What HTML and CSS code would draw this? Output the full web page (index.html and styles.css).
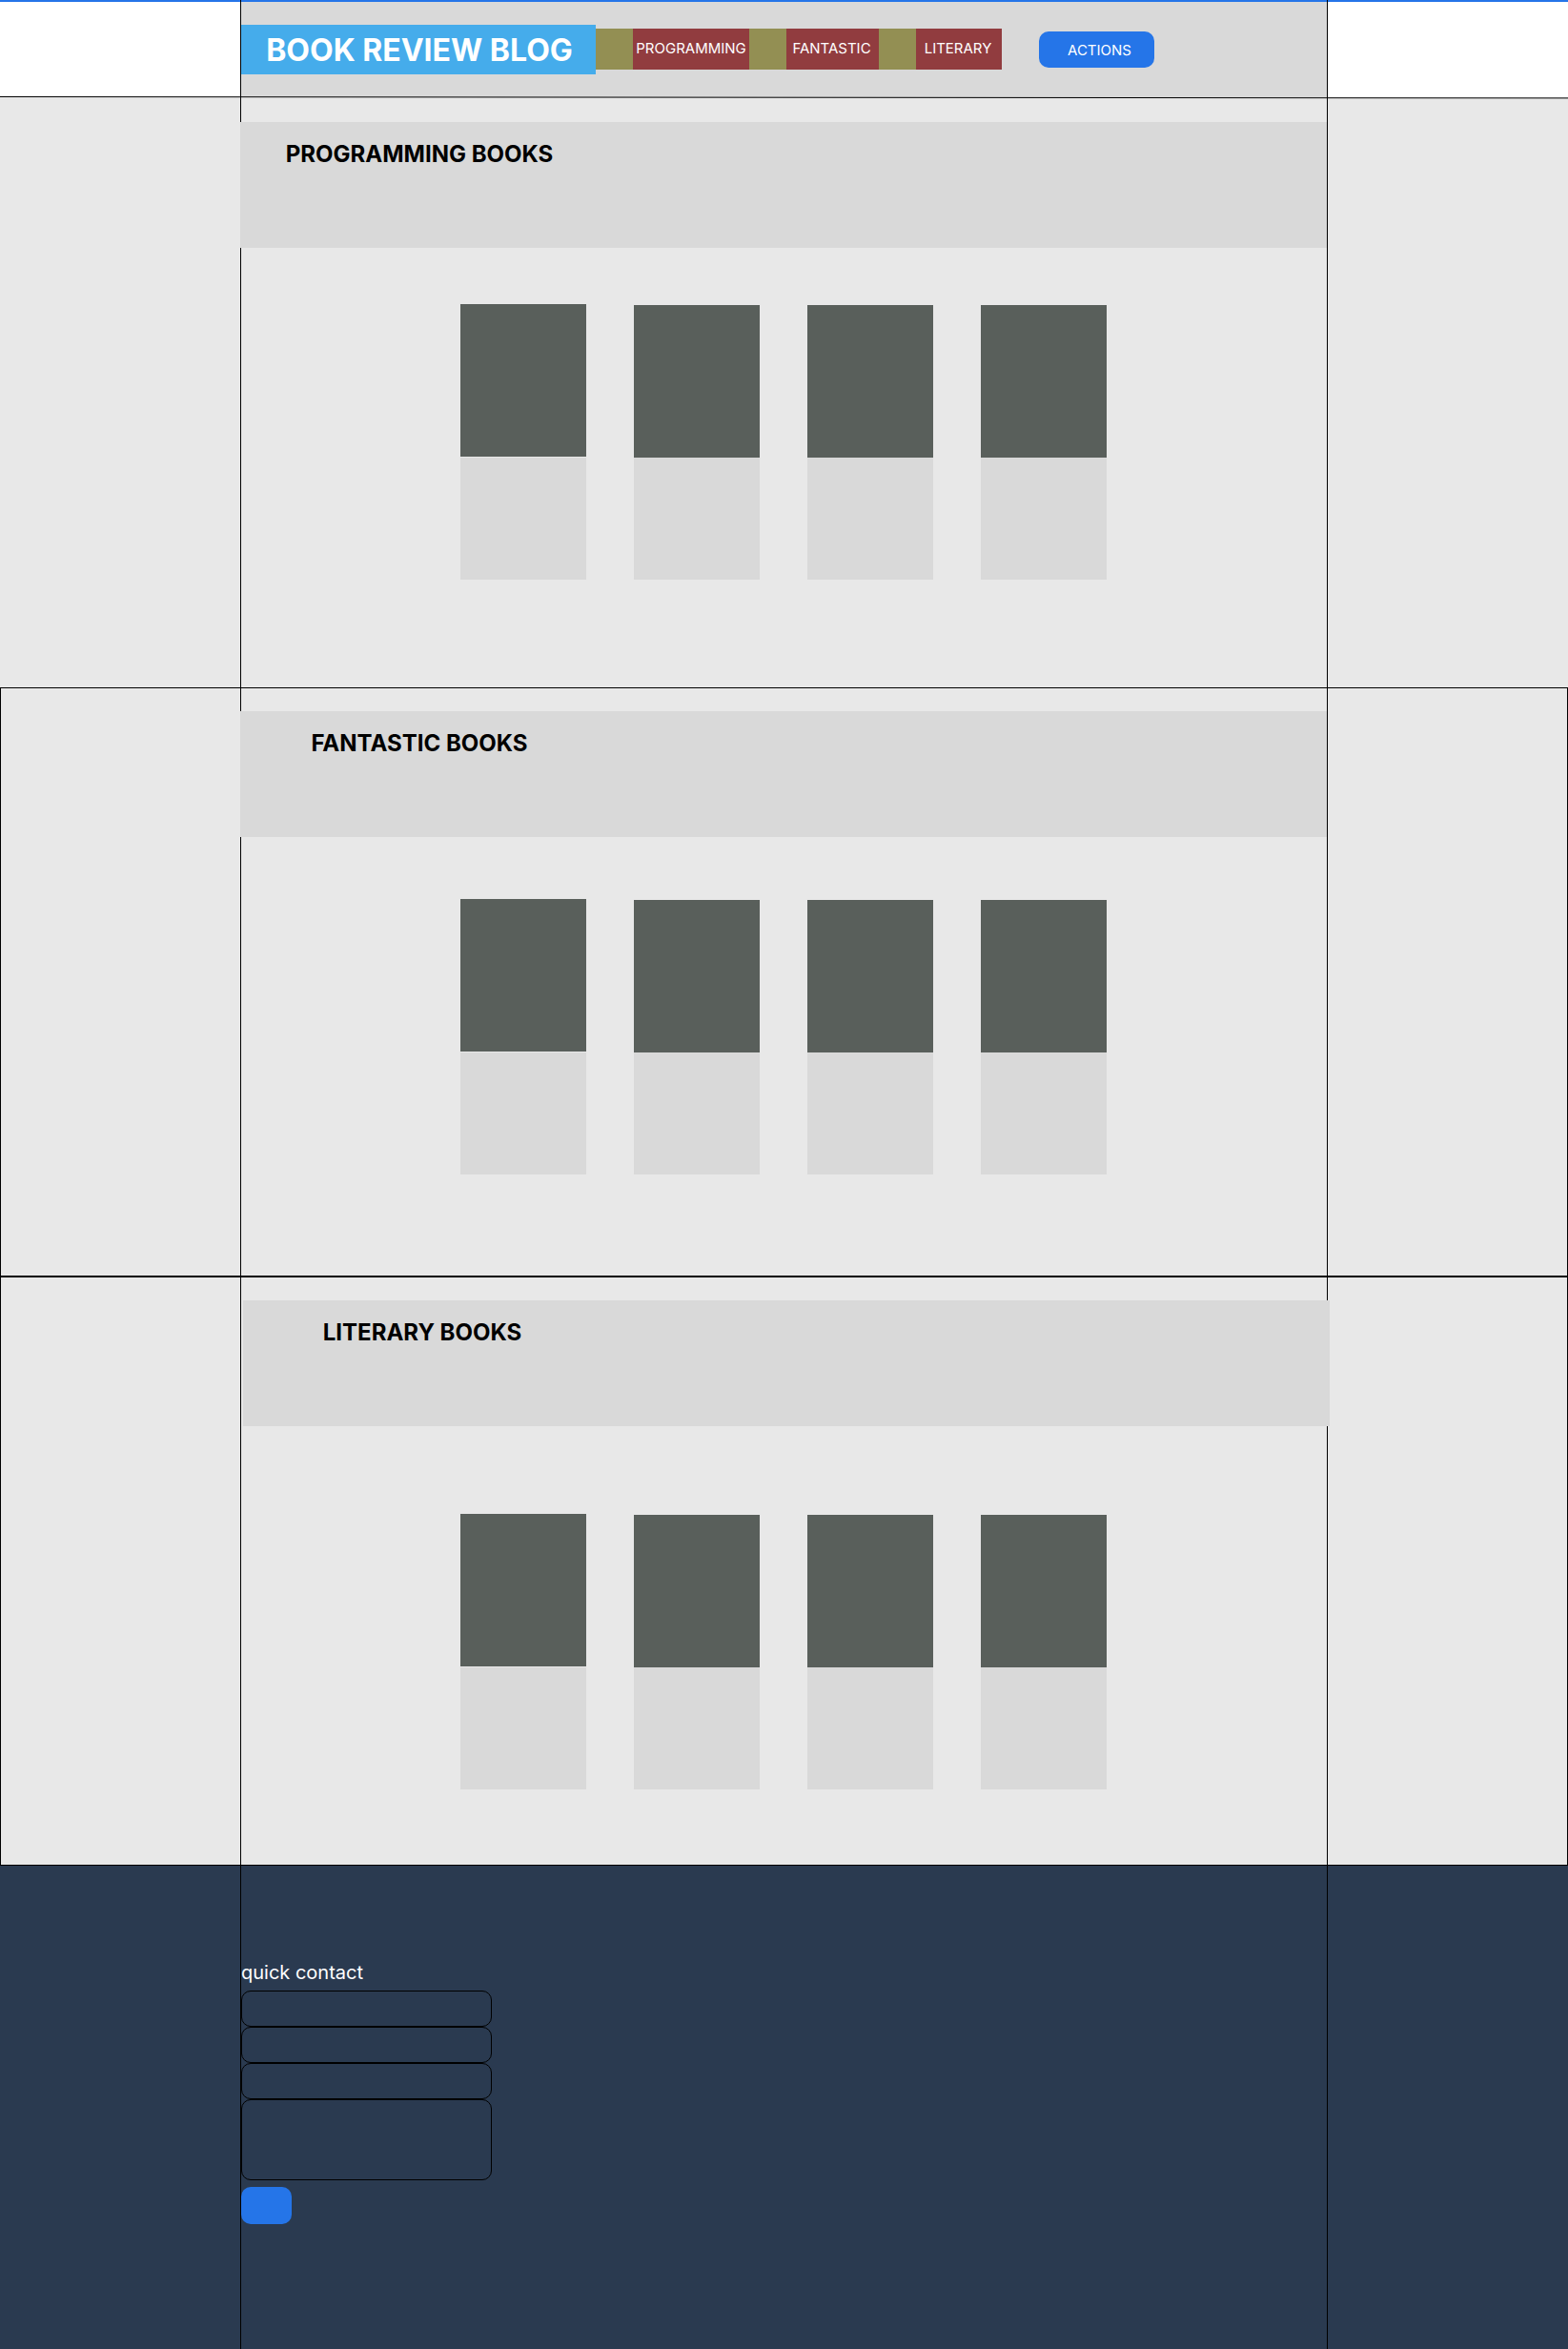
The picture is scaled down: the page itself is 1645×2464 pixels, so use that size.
FILE: index.html
```html
<!DOCTYPE html>
<html lang="en">
<head>
<meta charset="utf-8">
<meta name="viewport" content="width=device-width, initial-scale=1">
<title>Book Review Blog</title>
<link rel="stylesheet" href="styles.css">
</head>
<body>
<header class="site-header">
  <div class="container header-bar">
    <h1 class="brand">BOOK REVIEW BLOG</h1>
    <nav class="nav" aria-label="Categories">
      <a class="nav-link nav-link-lg" href="#programming">PROGRAMMING</a>
      <a class="nav-link nav-link-md" href="#fantastic">FANTASTIC</a>
      <a class="nav-link nav-link-sm" href="#literary">LITERARY</a>
    </nav>
    <button class="button actions" type="button">ACTIONS</button>
  </div>
  <svg class="header-rule" viewBox="0 0 1645 3" preserveAspectRatio="none" aria-hidden="true"><path d="M0 .5L1645 1.9" stroke="#000" stroke-width="1"/></svg>
</header>
<main>
  <section class="shelf" id="programming">
    <div class="container shelf-body">
      <div class="banner"><h2 class="banner-title">PROGRAMMING BOOKS</h2></div>
      <div class="books books-near">
        <article class="book"><div class="cover"></div><div class="info"></div></article>
        <article class="book"><div class="cover"></div><div class="info"></div></article>
        <article class="book"><div class="cover"></div><div class="info"></div></article>
        <article class="book"><div class="cover"></div><div class="info"></div></article>
      </div>
    </div>
  </section>
  <section class="shelf shelf-framed" id="fantastic">
    <div class="container shelf-body">
      <div class="banner"><h2 class="banner-title">FANTASTIC BOOKS</h2></div>
      <div class="books books-mid">
        <article class="book"><div class="cover"></div><div class="info"></div></article>
        <article class="book"><div class="cover"></div><div class="info"></div></article>
        <article class="book"><div class="cover"></div><div class="info"></div></article>
        <article class="book"><div class="cover"></div><div class="info"></div></article>
      </div>
    </div>
  </section>
  <section class="shelf shelf-framed" id="literary">
    <div class="container shelf-body">
      <div class="banner banner-shifted"><h2 class="banner-title">LITERARY BOOKS</h2></div>
      <div class="books books-far">
        <article class="book"><div class="cover"></div><div class="info"></div></article>
        <article class="book"><div class="cover"></div><div class="info"></div></article>
        <article class="book"><div class="cover"></div><div class="info"></div></article>
        <article class="book"><div class="cover"></div><div class="info"></div></article>
      </div>
    </div>
  </section>
</main>
<footer class="site-footer">
  <div class="container footer-body">
    <form class="contact">
      <h2 class="contact-title">quick contact</h2>
      <input class="field" type="text" aria-label="Name">
      <input class="field" type="email" aria-label="Email">
      <input class="field" type="text" aria-label="Subject">
      <textarea class="field field-message" aria-label="Message"></textarea>
      <button class="button send" type="submit" aria-label="Send"></button>
    </form>
  </div>
</footer>
</body>
</html>
```
FILE: styles.css
```css
* {
  box-sizing: border-box;
}

body {
  display: flex;
  flex-direction: column;
  min-height: 100vh;
  margin: 0;
  background: #e8e8e8;
  color: #000;
  font-family: Inter, "Liberation Sans", sans-serif;
}

h1,
h2 {
  margin: 0;
}

/* Centred column with a guide line down each side */
.container {
  width: 100%;
  max-width: 1141px;
  margin: 0 auto;
  border: solid #000;
  border-width: 0 1px;
}

/* Header */
.site-header {
  position: relative;
  background: linear-gradient(#2575e8 2px, #fff 2px);
}

.header-bar {
  display: flex;
  align-items: center;
  min-height: 102px;
  padding: 2px 0 0;
  background: linear-gradient(#2575e8 2px, #d9d9d9 2px);
}

.header-rule {
  position: absolute;
  left: 0;
  top: 101px;
  width: 100%;
  height: 3px;
}

.brand {
  width: 372px;
  padding: 2px 0 0 2px;
  background: #45aceb;
  color: #fff;
  font-size: 32px;
  line-height: 50px;
  text-align: center;
}

.nav {
  display: flex;
  gap: 39px;
  margin-bottom: 1px;
  padding-left: 39px;
  background: #938f53;
}

.nav-link {
  padding-bottom: 1px;
  background: #913c3f;
  color: #fff;
  font-size: 15px;
  line-height: 42px;
  text-align: center;
  text-decoration: none;
}

.nav-link-lg {
  width: 122px;
}

.nav-link-md {
  width: 97px;
  padding-right: 2px;
}

.nav-link-sm {
  width: 90px;
  padding-right: 2px;
}

.button {
  border: 0;
  border-radius: 10px;
  background: #2575e8;
  color: #fff;
  font: 15px/20px Inter, "Liberation Sans", sans-serif;
}

.actions {
  width: 121px;
  height: 38px;
  margin-left: 39px;
  padding: 1px 0 0 6px;
}

/* Book shelves */
.shelf-framed {
  border: 1px solid #000;
}

.shelf-body {
  padding-top: 24px;
}

.shelf:first-child .shelf-body {
  padding-top: 26px;
}

.banner {
  min-height: 132px;
  margin-left: -1px;
  padding-top: 19px;
  background: #d9d9d9;
}

.banner-shifted {
  margin: 0 -3px 0 2px;
}

.banner-title {
  width: 376px;
  font-size: 24px;
  line-height: 30px;
  text-align: center;
}

.books {
  display: flex;
  flex-wrap: wrap;
  align-items: flex-end;
  justify-content: center;
  gap: 50px;
  margin-left: -1px;
}

.books-near {
  padding: 59px 0 113px;
}

.books-mid {
  padding: 65px 0 106px;
}

.books-far {
  padding: 92px 0 79px;
}

.book {
  display: grid;
  width: 132px;
}

.book:first-child {
  row-gap: 1px;
}

.cover {
  height: 160px;
  background: #595f5b;
}

.info {
  height: 128px;
  background: #d9d9d9;
}

/* Footer */
.site-footer {
  display: flex;
  flex: 1;
  background: #2a3a50;
}

.footer-body {
  padding: 100px 0 131px;
}

.contact {
  display: flex;
  flex-direction: column;
  align-items: flex-start;
}

.contact-title {
  margin-bottom: 7px;
  color: #fff;
  font-size: 20px;
  font-weight: 400;
  line-height: 24px;
}

.field {
  width: 263px;
  height: 38px;
  padding: 8px 12px;
  border: 1px solid #000;
  border-radius: 10px;
  background: transparent;
  color: #fff;
  font: 15px/20px Inter, "Liberation Sans", sans-serif;
}

.field-message {
  height: 85px;
  resize: none;
}

.send {
  width: 53px;
  height: 39px;
  margin-top: 7px;
}
```
